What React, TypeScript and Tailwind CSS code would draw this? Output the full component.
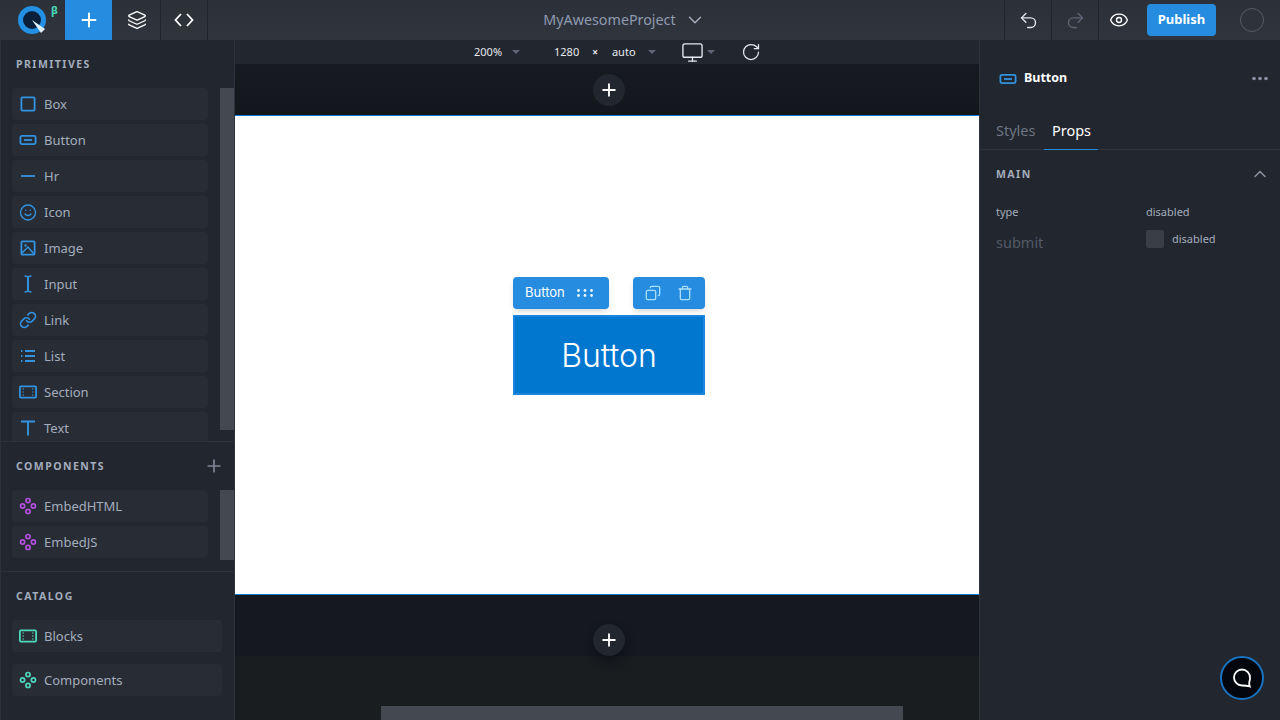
import React from "react";
import { Plus, Layers, ChevronDown, ChevronUp, Undo2, Redo2, Eye, Monitor, RotateCw, Copy, Trash, Smile, Link } from "lucide-react";

const BLUE = "#3193e0";

function Svg({ children, color = BLUE, sw = 1.8 }: { children: React.ReactNode; color?: string; sw?: number }) {
  return (
    <svg width={18} height={18} viewBox="0 0 18 18" fill="none" stroke={color} strokeWidth={sw} className="shrink-0">
      {children}
    </svg>
  );
}

const BoxI = () => <Svg><rect x="2.4" y="2.4" width="13.2" height="13.2" rx="1" /></Svg>;
const ButtonI = ({ color = BLUE }: { color?: string }) => (
  <Svg color={color}><rect x="1.4" y="4.9" width="15.2" height="8.2" rx="1.5" /><path d="M5 9h8" /></Svg>
);
const HrI = () => <Svg><path d="M2 9h14" /></Svg>;
const ImageI = () => (
  <Svg>
    <rect x="2.4" y="2.4" width="13.2" height="13.2" rx="1" />
    <circle cx="6.5" cy="6.5" r="1.2" fill={BLUE} stroke="none" />
    <path d="M3 14l6-6 6 7" strokeWidth={1.5} />
  </Svg>
);
const InputI = () => (
  <Svg sw={1.5}>
    <path d="M9 3v12" strokeWidth={2} />
    <path d="M5.5 1c2.2 0 3.5.7 3.5 2 0-1.3 1.3-2 3.500-2M5.500 17c2.200 0 3.500-.7 3.500-2 0 1.300 1.300 2 3.500 2" />
  </Svg>
);
const ListI = () => (
  <Svg>
    <path d="M6 4h10M6 9h10M6 14h10" />
    <path d="M2 4h1.4M2 9h1.4M2 14h1.4" />
  </Svg>
);
const SectionI = ({ color = BLUE }: { color?: string }) => (
  <Svg color={color}>
    <rect x="0.9" y="3.4" width="16.2" height="11.2" rx="1" />
    <path d="M3.5 6h1.5M3.5 9h1.5M3.5 12h1.5M13 6h1.5M13 9h1.5M13 12h1.5" strokeWidth={1.2} />
  </Svg>
);
const TextI = () => <Svg sw={1.9}><path d="M2 2.500h14M9 2.500V16.500" /></Svg>;
const CompI = ({ color }: { color: string }) => (
  <Svg color={color} sw={1.7}>
    <circle cx="9" cy="3.6" r="2.1" />
    <circle cx="9" cy="14.4" r="2.1" />
    <circle cx="3.6" cy="9" r="2.1" />
    <circle cx="14.4" cy="9" r="2.1" />
  </Svg>
);

function Item({ icon, label, wide }: { icon: React.ReactNode; label: string; wide?: boolean }) {
  return (
    <div className={`${wide ? "w-[210px]" : "w-[196px]"} h-8 shrink-0 flex items-center rounded-sm bg-[#282c35] pl-[7px]`}>
      <span className="w-[18px] flex justify-center">{icon}</span>
      <span className="ml-[7px] pt-[2px] text-[13px] text-[#a3adbd]">{label}</span>
    </div>
  );
}

function SectionTitle({ children }: { children: React.ReactNode }) {
  return <div className="text-[10.5px] font-bold tracking-[0.14em] text-[#a3adbd] leading-none">{children}</div>;
}

function Caret() {
  return <span className="inline-block w-0 h-0 border-x-[4px] border-x-transparent border-t-[4px] border-t-[#5e6675]" />;
}

function Cell({ children, className = "" }: { children: React.ReactNode; className?: string }) {
  return <div className={`h-10 flex items-center justify-center border-r border-[#20242b] ${className}`}>{children}</div>;
}

function AddBtn() {
  return (
    <div className="w-8 h-8 rounded-full bg-[#22262e] flex items-center justify-center">
      <Plus size={20} color="#ffffff" strokeWidth={2.2} />
    </div>
  );
}

export default function App() {
  const primitives: [React.ReactNode, string][] = [
    [<BoxI />, "Box"],
    [<ButtonI />, "Button"],
    [<HrI />, "Hr"],
    [<Smile size={19} color={BLUE} strokeWidth={1.9} />, "Icon"],
    [<ImageI />, "Image"],
    [<InputI />, "Input"],
    [<Link size={18} color={BLUE} strokeWidth={2.2} />, "Link"],
    [<ListI />, "List"],
    [<SectionI />, "Section"],
    [<TextI />, "Text"],
  ];
  return (
    <div className="w-[1280px] h-[720px] overflow-hidden flex flex-col bg-[#22262e] font-['Noto_Sans',sans-serif]">
      {/* top bar */}
      <header className="h-10 shrink-0 flex items-stretch bg-gradient-to-b from-[#2c3039] to-[#30343d]">
        <div className="w-[65px] h-10 relative flex items-center pl-[18px]">
          <div className="w-7 h-7 rounded-full border-[5px] border-[#2390e6] bg-[#0a1f3a]" />
          <svg width="15" height="15" viewBox="0 0 15 15" className="absolute left-[31px] top-[19px]"><path d="M1 1 L14 10 L10 14 Z" fill="#dff2fb" /></svg>
          <span className="absolute left-[51px] top-[2px] text-[11px] font-bold text-[#49d8b8]">β</span>
        </div>
        <div className="w-[47px] h-10 bg-[#258ce0] flex items-center justify-center mr-px">
          <Plus size={22} color="#fff" strokeWidth={2.2} />
        </div>
        <Cell className="w-[48px]"><Layers size={20} color="#fff" strokeWidth={1.6} /></Cell>
        <Cell className="w-[47px]">
          <svg width="20" height="14" viewBox="0 0 20 14" fill="none" stroke="#fff" strokeWidth="1.8"><path d="M7 1 1.500 7 7 13M13 1l5.500 6L13 13" /></svg>
        </Cell>
        <div className="flex-1 flex items-center justify-center gap-2 pl-[37px]">
          <span className="text-[14.3px] text-[#8f9bb0]">MyAwesomeProject</span>
          <ChevronDown size={22} color="#a3adbd" strokeWidth={1.6} />
        </div>
        <Cell className="w-12 border-l"><Undo2 size={21} color="#e4e7ec" strokeWidth={1.6} /></Cell>
        <Cell className="w-[47px]"><Redo2 size={21} color="#5e6675" strokeWidth={1.6} /></Cell>
        <div className="w-[48px] flex items-center justify-center pr-2"><Eye size={20} color="#fff" strokeWidth={1.6} /></div>
        <div className="flex items-center">
          <button className="w-[69px] h-8 bg-[#258ce0] rounded-sm text-[13px] font-bold text-white">Publish</button>
        </div>
        <div className="w-[64px] flex items-center justify-end pr-4">
          <div className="w-6 h-6 rounded-full border border-[#565c68]" />
        </div>
      </header>

      <div className="flex-1 flex min-h-0">
        {/* left */}
        <aside className="w-[235px] shrink-0 border-x border-[#2e323a] flex flex-col">
          <section className="h-[402px] shrink-0 overflow-hidden flex flex-col pl-[11px] border-b border-[#2e323a]">
            <div className="h-12 shrink-0 flex items-center pl-[4px]"><SectionTitle>PRIMITIVES</SectionTitle></div>
            <div className="flex">
              <div className="flex flex-col gap-1">{primitives.map(([i, l]) => <Item key={l} icon={i} label={l} />)}</div>
              <div className="ml-3 w-[14px] h-[342px] bg-[#444850]" />
            </div>
          </section>
          <section className="h-[130px] shrink-0 pl-[11px] border-b border-[#2e323a]">
            <div className="h-[48px] flex items-center justify-between pl-[4px] pr-[10px]">
              <SectionTitle>COMPONENTS</SectionTitle>
              <Plus size={20} color="#7f8797" strokeWidth={2} />
            </div>
            <div className="flex">
              <div className="flex flex-col gap-1">
                <Item icon={<CompI color="#b44fe0" />} label="EmbedHTML" />
                <Item icon={<CompI color="#b44fe0" />} label="EmbedJS" />
              </div>
              <div className="ml-3 w-[14px] h-[70px] bg-[#444850]" />
            </div>
          </section>
          <section className="flex-1 flex flex-col pl-[11px]">
            <div className="h-[48px] shrink-0 flex items-center pl-[4px]"><SectionTitle>CATALOG</SectionTitle></div>
            <div className="flex flex-col gap-3">
              <Item wide icon={<SectionI color="#4fd8bd" />} label="Blocks" />
              <Item wide icon={<CompI color="#4fd8bd" />} label="Components" />
            </div>
          </section>
        </aside>

        {/* center */}
        <main className="w-[744px] shrink-0 flex flex-col bg-[#191d20] overflow-hidden">
          <div className="h-6 shrink-0 bg-[#22262e] flex items-center text-[11px] text-[#e6e9ee] pl-[239px]">
            <span>200%</span>
            <span className="ml-[10px] mr-[34px] flex"><Caret /></span>
            <span>1280</span>
            <span className="ml-[13px] mr-[14px] text-[10px] font-bold">×</span>
            <span>auto</span>
            <span className="ml-3 mr-[25px] flex"><Caret /></span>
            <Monitor size={23} color="#e6e9ee" strokeWidth={1.4} />
            <span className="ml-[3px] mr-[26px] flex"><Caret /></span>
            <RotateCw size={20} color="#e6e9ee" strokeWidth={1.5} />
          </div>
          <div className="h-[51px] shrink-0 bg-gradient-to-b from-[#171a20] to-[#13161b] flex items-center justify-center pl-[4px] pt-px">
            <AddBtn />
          </div>
          <div className="h-[480px] shrink-0 bg-white border-y border-[#0d7bd4] flex items-center justify-center pl-[4px]">
            <div className="relative">
              <div className="absolute left-0 -top-[38px] w-24 h-8 rounded-sm bg-[#258ce0] flex items-center pl-3 gap-[12px] shadow-md">
                <span className="font-['Inter',sans-serif] text-[13px] text-white">Button</span>
                <svg width="16" height="8" viewBox="0 0 16 8" fill="#eaf5ff"><circle cx="1.5" cy="1.5" r="1.4" /><circle cx="8" cy="1.5" r="1.4" /><circle cx="14.5" cy="1.5" r="1.4" /><circle cx="1.5" cy="6.5" r="1.4" /><circle cx="8" cy="6.5" r="1.4" /><circle cx="14.5" cy="6.5" r="1.4" /></svg>
              </div>
              <div className="absolute right-0 -top-[38px] w-[72px] h-8 rounded-sm bg-[#258ce0] flex items-center justify-center gap-4 shadow-md">
                <Copy size={16} color="#a8defc" strokeWidth={2} className="-scale-x-100" />
                <Trash size={16} color="#a8defc" strokeWidth={2} />
              </div>
              <button className="w-48 h-20 bg-[#0277cf] border-2 border-[#1a85de] text-white text-[32px] pt-[2px] font-['Inter',sans-serif] font-light">Button</button>
            </div>
          </div>
          <div className="h-[61px] shrink-0 bg-[#15181f] flex items-start justify-center pl-[4px] pt-[29px]">
            <div className="rounded-full shadow-[0_6px_10px_rgba(10,10,15,0.5)]"><AddBtn /></div>
          </div>
          <div className="flex-1 pt-[50px] pl-[146px]">
            <div className="w-[522px] h-[20px] bg-[#444850]" />
          </div>
        </main>

        {/* right */}
        <aside className="flex-1 border-l border-[#2e323a] relative">
          <div className="h-[76px] flex items-center pl-[19px] pr-[11px] pt-[1px]">
            <ButtonI />
            <span className="ml-[7px] text-[12.5px] font-bold text-white flex-1">Button</span>
            <svg width="18" height="5" viewBox="0 0 18 5" fill="#8a93a3"><circle cx="3" cy="2.5" r="1.8" /><circle cx="9" cy="2.5" r="1.8" /><circle cx="15" cy="2.5" r="1.8" /></svg>
          </div>
          <div className="h-[34px] flex items-start border-b border-[#2e323a] pl-4">
            <span className="text-[14.5px] text-[#6c7585] leading-[28px]">Styles</span>
            <span className="ml-[9px] w-[54px] h-[34px] text-center text-[14.5px] text-white leading-[28px] border-b border-[#258ce0]">Props</span>
          </div>
          <div className="h-[48px] flex items-center justify-between pl-4 pr-[10px]">
            <SectionTitle>MAIN</SectionTitle>
            <ChevronUp size={20} color="#8a93a3" strokeWidth={1.8} />
          </div>
          <div className="grid grid-cols-[150px_1fr] pl-4 pt-[6px]">
            <span className="text-[11px] text-[#a3adbd] leading-4">type</span>
            <span className="text-[11px] text-[#a3adbd] leading-4">disabled</span>
            <span className="text-[14.5px] text-[#525a68] leading-6 mt-[10px]">submit</span>
            <div className="flex items-center gap-2 mt-[10px] h-[18px]">
              <span className="w-[18px] h-[18px] rounded-[2px] bg-[#3a3e47]" />
              <span className="text-[11px] text-[#a3adbd]">disabled</span>
            </div>
          </div>
          <div className="absolute right-[16px] bottom-[20px] w-11 h-11 rounded-full bg-[#04060d] border-2 border-[#1a73c0] flex items-center justify-center">
            <svg width="22" height="22" viewBox="0 0 22 22" fill="none" stroke="#fff" strokeWidth="1.8"><path d="M11 2.500a8 8 0 1 0 0 16c1.400 0 5 0 7.800 1-.5-1.500-.8-3.500-.4-5 .4-1 .6-2 .6-3.500a8 8 0 0 0-8-8.500z" /></svg>
          </div>
        </aside>
      </div>
    </div>
  );
}
